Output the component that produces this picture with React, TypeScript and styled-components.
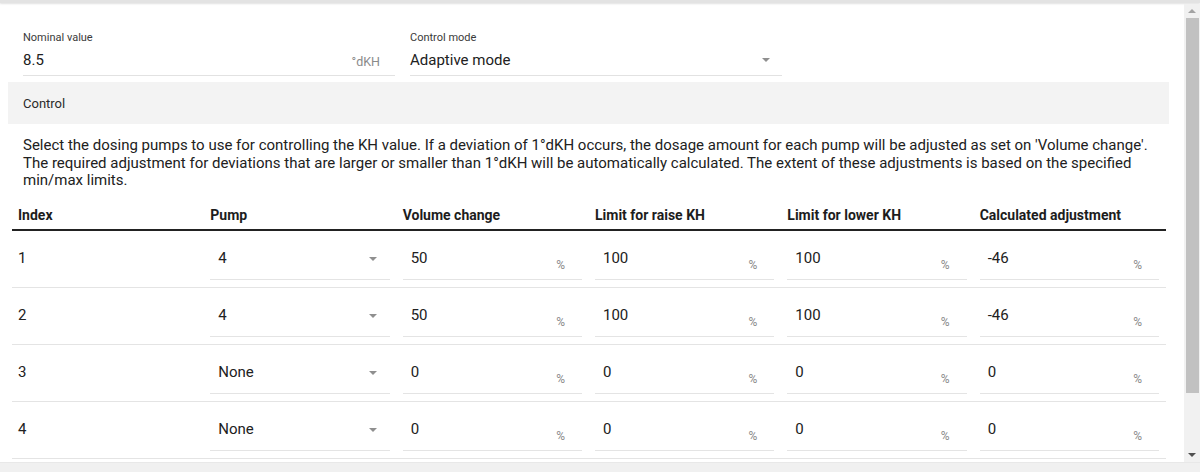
import styled, { createGlobalStyle } from 'styled-components'

const GlobalStyle = createGlobalStyle`
  body {
    margin: 0;
    font-family: Roboto, "Liberation Sans", sans-serif;
    color: #212121;
    background: #fff;
  }
`

const rows = [
  { index: 1, pump: '4', volume: '50', raise: '100', lower: '100', calc: '-46' },
  { index: 2, pump: '4', volume: '50', raise: '100', lower: '100', calc: '-46' },
  { index: 3, pump: 'None', volume: '0', raise: '0', lower: '0', calc: '0' },
  { index: 4, pump: 'None', volume: '0', raise: '0', lower: '0', calc: '0' },
]

const Page = styled.div`
  height: 472px;
  display: flex;
  flex-direction: column;
  overflow: hidden;
`

const TopShade = styled.div`
  height: 3px;
  flex-shrink: 0;
  background: #e3e3e3;
  box-shadow: 0 1px 2px rgba(0, 0, 0, 0.12);
  margin-bottom: 1px;
`

const Body = styled.div`
  flex: 1;
  min-height: 0;
  display: flex;
`

const Main = styled.div`
  flex: 1;
  min-width: 0;
  overflow: hidden;
`

const Content = styled.div`
  padding: 0 15px 0 8px;
`

const FieldsRow = styled.div`
  display: flex;
  gap: 15px;
  padding: 27px 0 0 15px;
  margin-bottom: 6px;
`

const Field = styled.div`
  width: 372px;
`

const Label = styled.div`
  font-size: 11px;
  line-height: 13px;
  color: #3a3a3a;
`

const InputLine = styled.div`
  display: flex;
  align-items: center;
  margin-top: 7px;
  padding-bottom: 6px;
  border-bottom: 1px solid #e2e2e2;
`

const Value = styled.span`
  flex: 1;
  font-size: 15px;
  line-height: 18px;
  color: #212121;
`

const Unit = styled.span<{ $small?: boolean }>`
  font-size: ${(p) => (p.$small ? '12px' : '12.5px')};
  color: #8a8a8a;
  padding-top: ${(p) => (p.$small ? '12px' : '4px')};
  padding-right: ${(p) => (p.$small ? '17px' : '15px')};
  line-height: 14px;
`

const Arrow = styled.span`
  width: 0;
  height: 0;
  border-left: 4px solid transparent;
  border-right: 4px solid transparent;
  border-top: 4px solid #8f8f8f;
  margin-right: 12px;
`

const SectionBar = styled.div`
  background: #f3f3f3;
  height: 42px;
  display: flex;
  align-items: center;
  padding-left: 15px;
  font-size: 13px;
  color: #2a2a2a;
`

const Description = styled.p`
  margin: 13px 0 0;
  padding: 0 8px 0 15px;
  font-size: 15px;
  line-height: 17.6px;
  color: #212121;
`

const Table = styled.div`
  margin: 0 3px 0 4px;
`

const HeaderRow = styled.div`
  display: grid;
  grid-template-columns: repeat(6, 1fr);
  border-bottom: 2px solid #222;
  padding-top: 17px;
`

const HeadCell = styled.div`
  font-size: 14px;
  font-weight: 700;
  line-height: 16px;
  padding: 0 5px 6px 6px;
  color: #1d1d1d;
`

const Row = styled.div`
  display: grid;
  grid-template-columns: repeat(6, 1fr);
  border-bottom: 1px solid #e4e4e4;
`

const Cell = styled.div`
  padding: 15px 7px 7px 6px;
  min-width: 0;
`

const IndexText = styled.div`
  padding-top: 3px;
  font-size: 15px;
  line-height: 18px;
`

const CellInput = styled.div`
  height: 33px;
  display: flex;
  align-items: flex-start;
  border-bottom: 1px solid #e4e4e4;
  padding-left: 8px;
`

const CellValue = styled.span`
  flex: 1;
  padding-top: 3px;
  font-size: 15px;
  line-height: 18px;
`

const CellArrow = styled(Arrow)`
  margin-top: 11px;
  margin-right: 13px;
`

const ScrollBar = styled.div`
  width: 16px;
  flex-shrink: 0;
  background: #f1f1f1;
  display: flex;
  flex-direction: column;
`

const ScrollButton = styled.div`
  height: 14px;
  display: flex;
  align-items: center;
  justify-content: center;
`

const ScrollTriangle = styled.span<{ $up?: boolean }>`
  width: 0;
  height: 0;
  border-left: 4px solid transparent;
  border-right: 4px solid transparent;
  ${(p) => (p.$up ? 'border-bottom: 4px solid #a3a3a3;' : 'border-top: 4px solid #505050;')}
`

const Track = styled.div`
  flex: 1;
  padding: 0 1px 0 2px;
`

const Thumb = styled.div`
  height: 375px;
  background: #c1c1c1;
`

const Footer = styled.div`
  height: 9px;
  flex-shrink: 0;
  background: #f0f0f0;
  border-top: 1px solid #e8e8e8;
`

const columns = ['Index', 'Pump', 'Volume change', 'Limit for raise KH', 'Limit for lower KH', 'Calculated adjustment']

const PercentInput = ({ value }: { value: string }) => (
  <Cell>
    <CellInput>
      <CellValue>{value}</CellValue>
      <Unit $small>%</Unit>
    </CellInput>
  </Cell>
)

const App = () => {
  return (
    <Page>
      <GlobalStyle />
      <TopShade />
      <Body>
        <Main>
          <Content>
            <FieldsRow>
              <Field>
                <Label>Nominal value</Label>
                <InputLine>
                  <Value>8.5</Value>
                  <Unit>°dKH</Unit>
                </InputLine>
              </Field>
              <Field>
                <Label>Control mode</Label>
                <InputLine>
                  <Value>Adaptive mode</Value>
                  <Arrow />
                </InputLine>
              </Field>
            </FieldsRow>
            <SectionBar>Control</SectionBar>
            <Description>
              Select the dosing pumps to use for controlling the KH value. If a deviation of 1°dKH occurs, the dosage amount for each pump will be adjusted as set on 'Volume change'. The required adjustment for deviations that are larger or smaller than 1°dKH will be automatically calculated. The extent of these adjustments is based on the specified min/max limits.
            </Description>
            <Table>
              <HeaderRow>
                {columns.map((c) => (
                  <HeadCell key={c}>{c}</HeadCell>
                ))}
              </HeaderRow>
              {rows.map((r) => (
                <Row key={r.index}>
                  <Cell>
                    <IndexText>{r.index}</IndexText>
                  </Cell>
                  <Cell>
                    <CellInput>
                      <CellValue>{r.pump}</CellValue>
                      <CellArrow />
                    </CellInput>
                  </Cell>
                  <PercentInput value={r.volume} />
                  <PercentInput value={r.raise} />
                  <PercentInput value={r.lower} />
                  <PercentInput value={r.calc} />
                </Row>
              ))}
            </Table>
          </Content>
        </Main>
        <ScrollBar>
          <ScrollButton>
            <ScrollTriangle $up />
          </ScrollButton>
          <Track>
            <Thumb />
          </Track>
          <ScrollButton>
            <ScrollTriangle />
          </ScrollButton>
        </ScrollBar>
      </Body>
      <Footer />
    </Page>
  )
}

export default App
